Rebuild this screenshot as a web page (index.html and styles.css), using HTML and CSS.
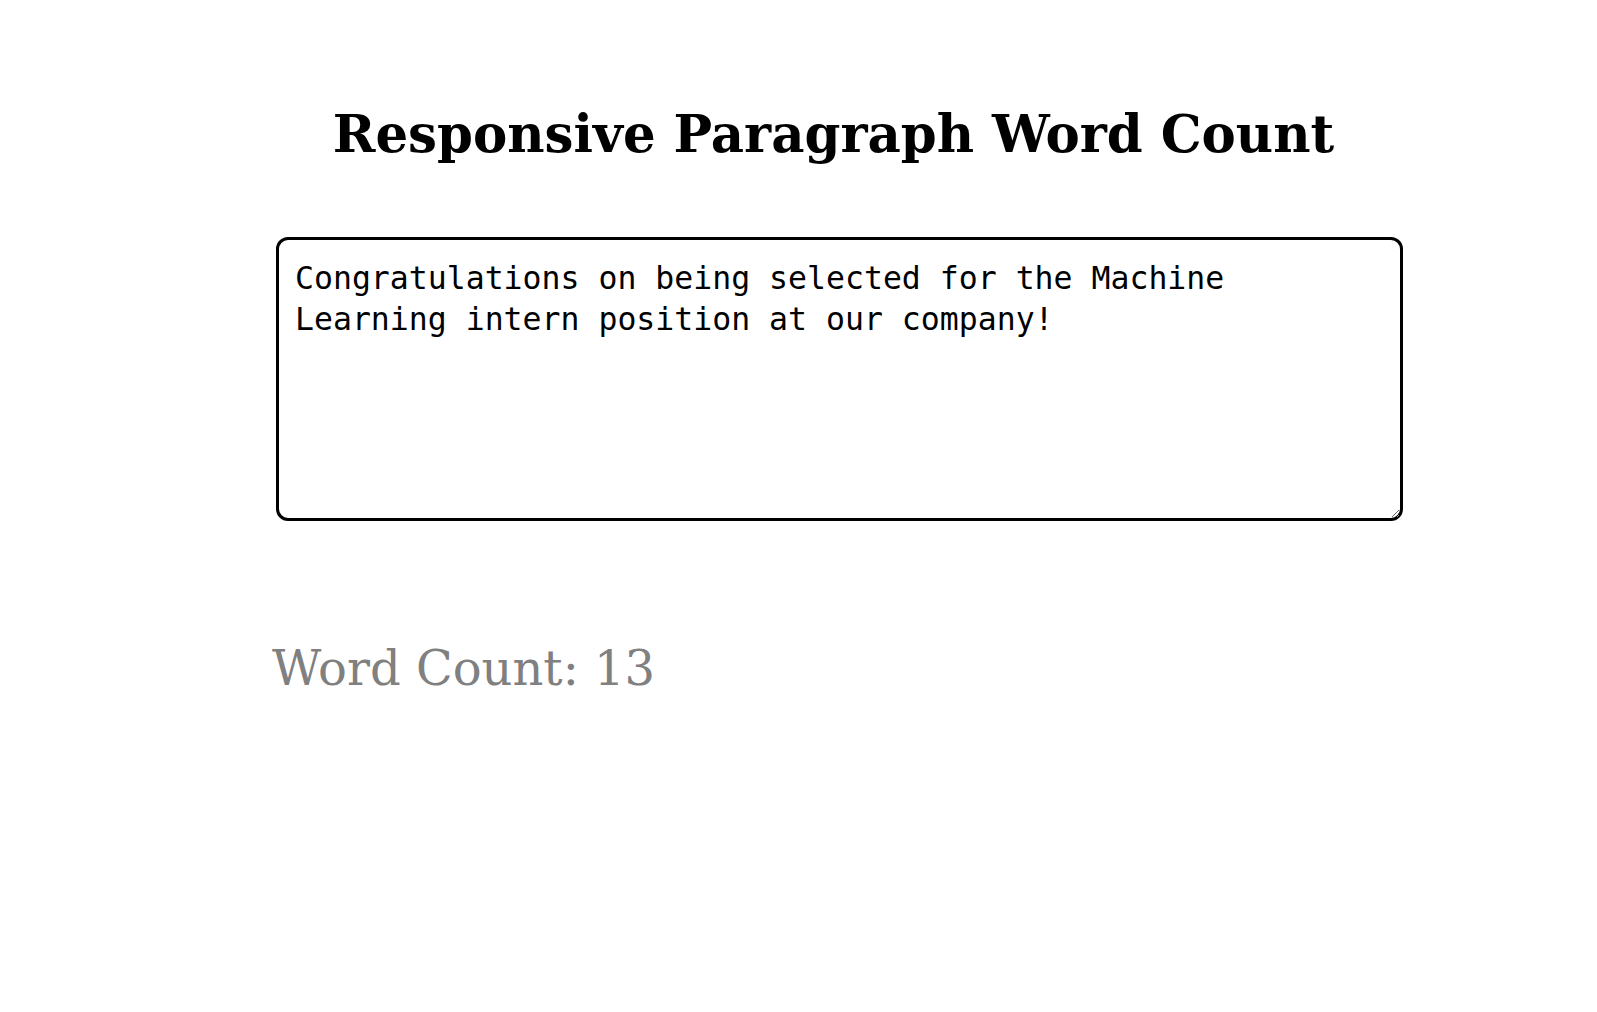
FILE: index.html
```html
<!DOCTYPE html>
<html lang="en">
<head>
<meta charset="utf-8">
<title>Responsive Paragraph Word Count</title>
<link rel="stylesheet" href="styles.css">
</head>
<body>
<main class="container">
  <h1 class="title">Responsive Paragraph Word Count</h1>
  <textarea class="editor" spellcheck="false">Congratulations on being selected for the Machine Learning intern position at our company!</textarea>
  <p class="count">Word Count: 13</p>
</main>
</body>
</html>
```
FILE: styles.css
```css
html, body {
  margin: 0;
  padding: 0;
  background: #ffffff;
}

.container {
  display: flex;
  flex-direction: column;
  align-items: flex-start;
  width: 1131px;
  padding: 104px 0 0 272px;
}

.title {
  align-self: stretch;
  margin: 0;
  padding-right: 8px;
  text-align: center;
  font-family: "DejaVu Serif", "Liberation Serif", serif;
  font-weight: bold;
  font-size: 51.4px;
  line-height: 61px;
  color: #000;
}

.editor {
  box-sizing: border-box;
  width: 1127px;
  height: 284px;
  margin: 72px 0 0 4px;
  padding: 18px 16px;
  border: 3px solid #000;
  border-radius: 12px;
  background: #fff;
  color: #000;
  font-family: "DejaVu Sans Mono", "Liberation Mono", monospace;
  font-size: 31.5px;
  line-height: 40.7px;
  outline: none;
}

.count {
  margin: 119px 0 0 0;
  font-family: "DejaVu Serif", "Liberation Serif", serif;
  font-size: 48px;
  line-height: normal;
  color: #808080;
}
```
